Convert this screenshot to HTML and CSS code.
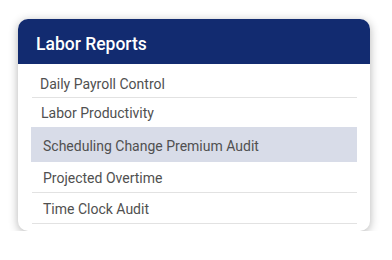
FILE: index.html
```html
<!DOCTYPE html>
<html>
<head>
<meta charset="utf-8">
<link rel="stylesheet" href="styles.css">
</head>
<body>
<div class="card">
  <div class="card-header">Labor Reports</div>
  <ul class="report-list">
    <li class="report report-a">Daily Payroll Control</li>
    <li class="report report-b">Labor Productivity</li>
    <li class="report report-active">Scheduling Change Premium Audit</li>
    <li class="report report-c">Projected Overtime</li>
    <li class="report report-c">Time Clock Audit</li>
  </ul>
</div>
</body>
</html>
```
FILE: styles.css
```css
html, body {
  margin: 0;
  padding: 0;
  background: #ffffff;
}
body {
  padding: 19px 0 0 18px;
  font-family: Roboto, "Liberation Sans", sans-serif;
}
.card {
  width: 352px;
  height: 212px;
  box-sizing: border-box;
  background: #ffffff;
  border-radius: 10px;
  box-shadow: 0 2px 10px rgba(0, 0, 0, 0.3);
  overflow: hidden;
}
.card-header {
  height: 45px;
  box-sizing: border-box;
  background: #122b70;
  color: #ffffff;
  font-size: 17.5px;
  font-weight: 500;
  padding: 15px 0 0 18px;
  line-height: 20px;
}
.report-list {
  list-style: none;
  margin: 0;
  padding: 3px 13px 0 14px;
}
.report {
  box-sizing: border-box;
  font-size: 14px;
  color: #505050;
  line-height: 18px;
}
.report-a {
  height: 31px;
  padding: 8px 0 0 8px;
  border-bottom: 1px solid #e2e2e2;
}
.report-b {
  height: 29px;
  padding: 6px 0 0 9px;
}
.report-active {
  height: 35px;
  margin-left: -1px;
  padding: 10px 0 0 12px;
  background: #d8dce8;
}
.report-c {
  height: 31px;
  padding: 7px 0 0 11px;
  border-bottom: 1px solid #e2e2e2;
}
```
